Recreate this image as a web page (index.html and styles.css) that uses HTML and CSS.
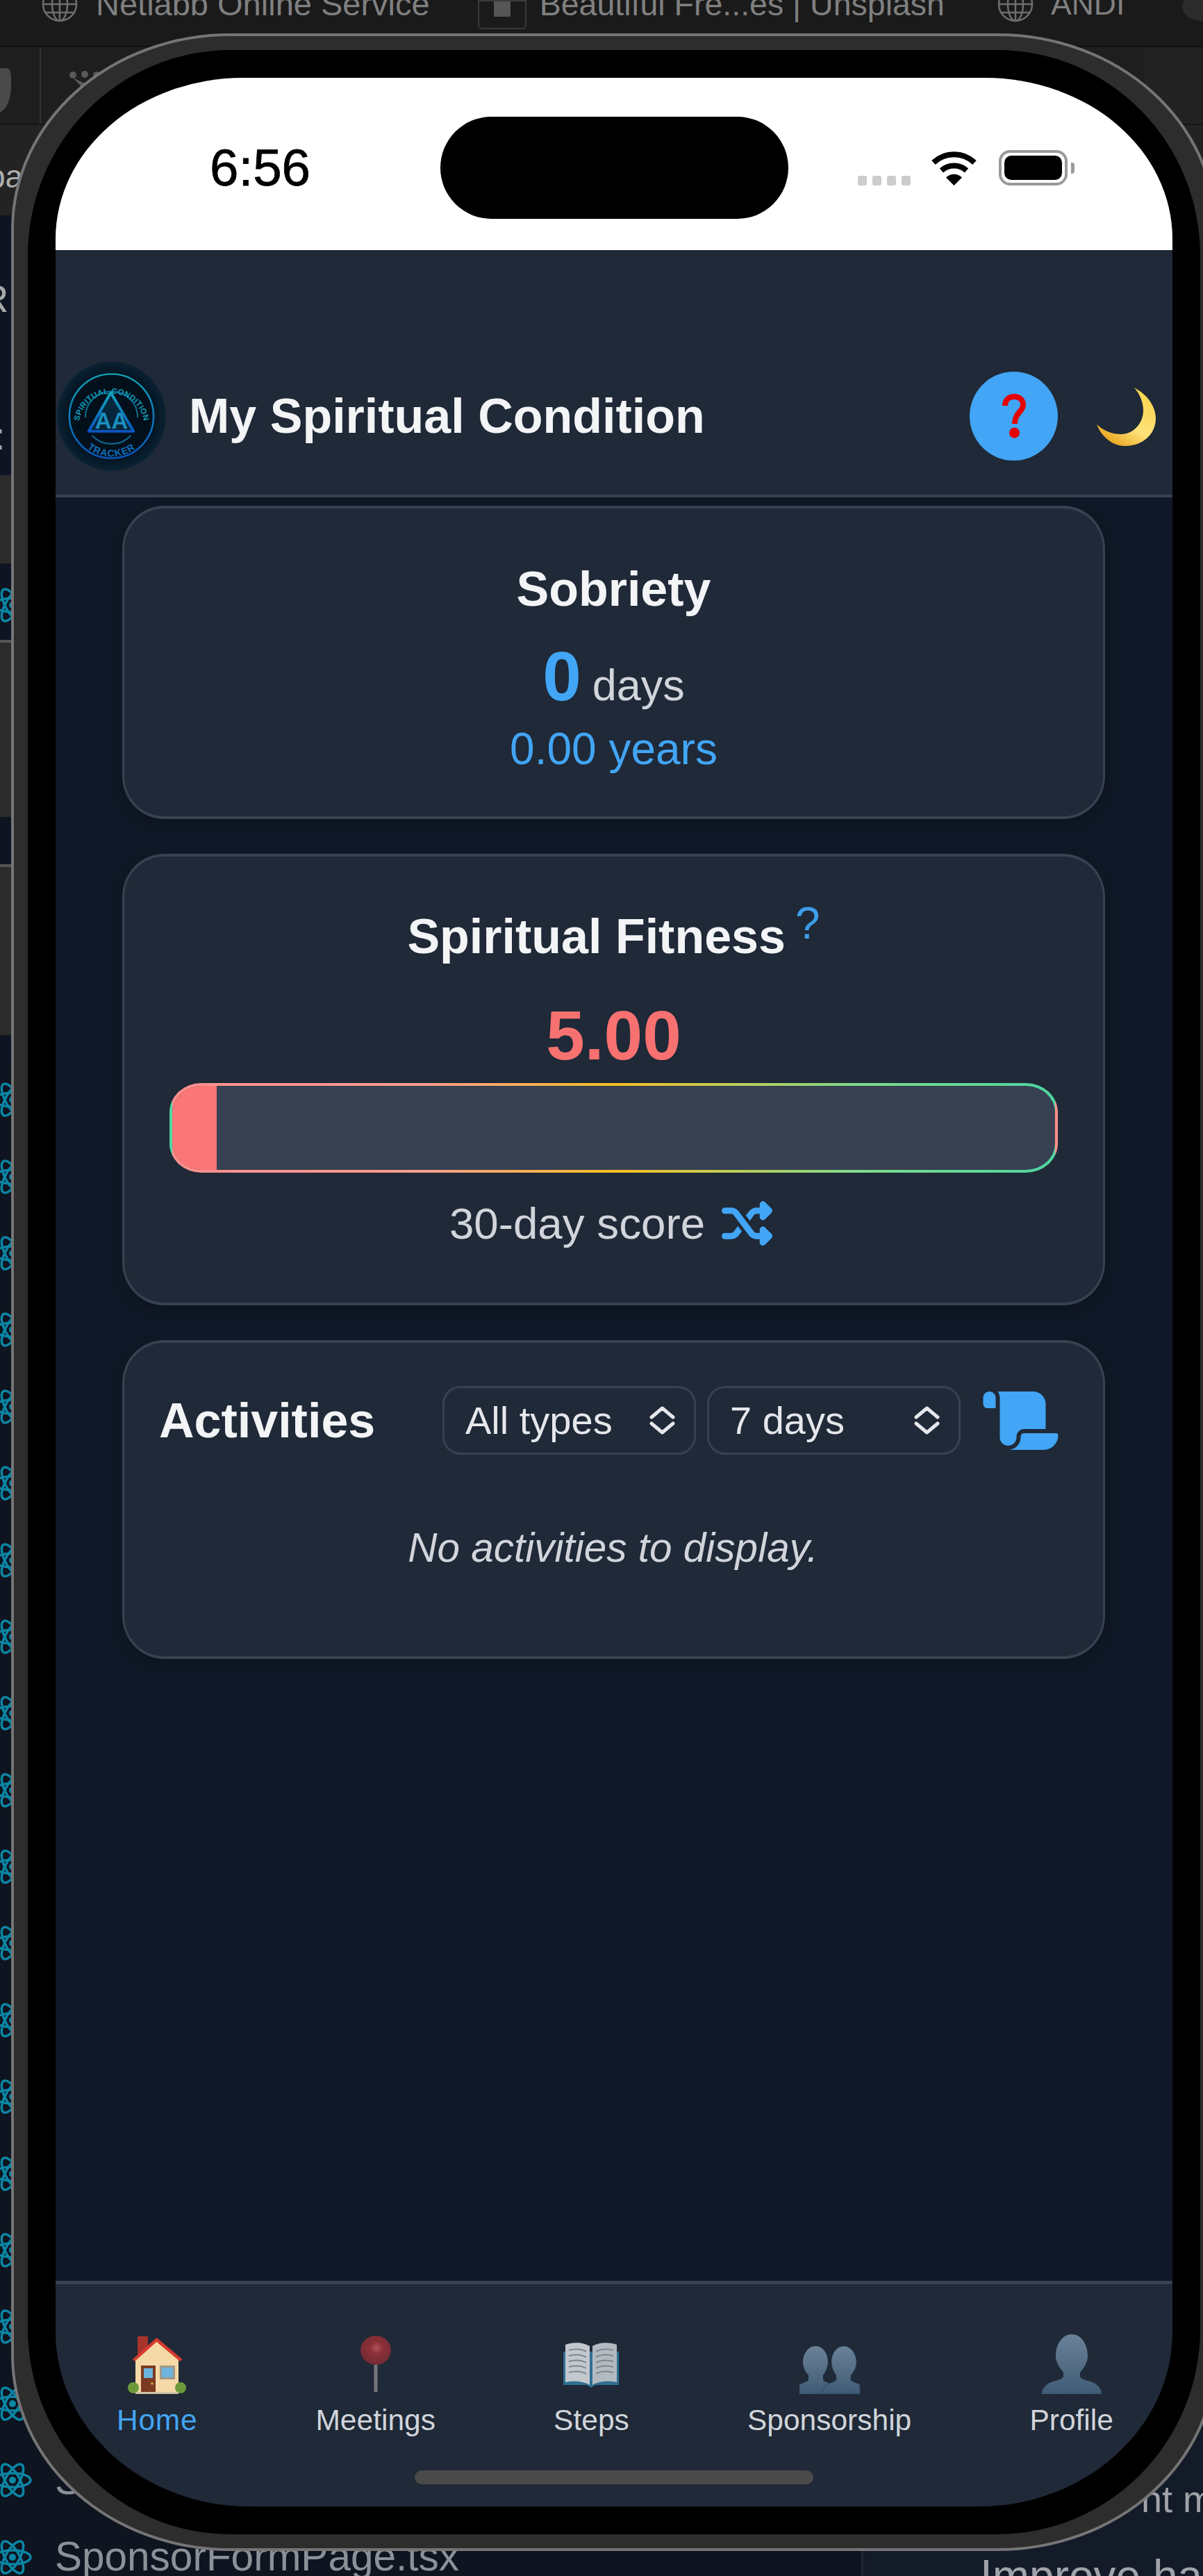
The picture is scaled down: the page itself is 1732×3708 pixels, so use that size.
FILE: index.html
```html
<!DOCTYPE html>
<html lang="en">
<head>
<meta charset="utf-8">
<title>My Spiritual Condition</title>
<link rel="stylesheet" href="styles.css">
</head>
<body>
<svg class="defs" width="0" height="0" aria-hidden="true">
  <symbol id="react" viewBox="0 0 60 60">
    <g fill="none" stroke="#0b86a4" stroke-width="3.5">
      <ellipse cx="30" cy="30" rx="26" ry="10"/>
      <ellipse cx="30" cy="30" rx="26" ry="10" transform="rotate(60 30 30)"/>
      <ellipse cx="30" cy="30" rx="26" ry="10" transform="rotate(120 30 30)"/>
    </g>
    <circle cx="30" cy="30" r="5" fill="#0b86a4"/>
  </symbol>
  <symbol id="globe" viewBox="0 0 52 52">
    <g fill="none" stroke="#6e6e6e" stroke-width="2.5">
      <circle cx="26" cy="26" r="24"/>
      <ellipse cx="26" cy="26" rx="11" ry="24"/>
      <path d="M26 2v48M2 26h48M6 14h40M6 38h40"/>
    </g>
  </symbol>
  <symbol id="chev" viewBox="0 0 37 41">
    <path d="M3 16 18.500 3 34 16M3 25l15.500 13L34 25" fill="none" stroke="#e5e7eb" stroke-width="5" stroke-linecap="round" stroke-linejoin="round"/>
  </symbol>
</svg>

<div class="desktop">
  <div class="tabs">
    <svg class="tab-globe first"><use href="#globe"/></svg>
    <span class="tab-text tab-netlabb">Netlabb Online Service</span>
    <span class="tab-square"><span class="tab-square-in"></span></span>
    <span class="tab-text tab-unsplash">Beautiful Fre...es | Unsplash</span>
    <svg class="tab-globe second"><use href="#globe"/></svg>
    <span class="tab-text tab-andi">ANDI</span>
    <span class="tab-round"></span>
  </div>
  <div class="toolbar">
    <div class="tool-cell tool-leaf"><span class="leaf"></span></div>
    <div class="tool-cell tool-rest">
      <svg class="people" viewBox="0 0 46 30"><g fill="#5a5a5a"><circle cx="6" cy="6" r="5"/><circle cx="23" cy="5" r="5"/><circle cx="40" cy="6" r="5"/><path d="M6 10 23 28 40 10 23 18Z"/></g></svg>
    </div>
    <div class="tool-end"></div>
  </div>
  <div class="pathbar"><span class="path-text">ba</span></div>
  <div class="workspace">
    <aside class="files">
      <div class="f-block f-a"><span class="f-r">R</span><span class="f-colon">:</span></div>
      <div class="f-gray f-b"></div>
      <div class="f-block f-c f-line"><svg class="file-icon"><use href="#react"/></svg></div>
      <div class="f-gray f-d"></div>
      <div class="f-block f-e f-line"></div>
      <div class="f-gray f-f"></div>
      <div class="f-block f-g"></div>
      <div class="file"><svg class="file-icon"><use href="#react"/></svg></div>
      <div class="file"><svg class="file-icon"><use href="#react"/></svg></div>
      <div class="file"><svg class="file-icon"><use href="#react"/></svg></div>
      <div class="file"><svg class="file-icon"><use href="#react"/></svg></div>
      <div class="file"><svg class="file-icon"><use href="#react"/></svg></div>
      <div class="file"><svg class="file-icon"><use href="#react"/></svg></div>
      <div class="file"><svg class="file-icon"><use href="#react"/></svg></div>
      <div class="file"><svg class="file-icon"><use href="#react"/></svg></div>
      <div class="file"><svg class="file-icon"><use href="#react"/></svg></div>
      <div class="file"><svg class="file-icon"><use href="#react"/></svg></div>
      <div class="file"><svg class="file-icon"><use href="#react"/></svg></div>
      <div class="file"><svg class="file-icon"><use href="#react"/></svg></div>
      <div class="file"><svg class="file-icon"><use href="#react"/></svg></div>
      <div class="file"><svg class="file-icon"><use href="#react"/></svg></div>
      <div class="file"><svg class="file-icon"><use href="#react"/></svg></div>
      <div class="file"><svg class="file-icon"><use href="#react"/></svg></div>
      <div class="file"><svg class="file-icon"><use href="#react"/></svg></div>
      <div class="file"><svg class="file-icon"><use href="#react"/></svg></div>
      <div class="file"><svg class="file-icon"><use href="#react"/></svg><span class="file-name">Sp</span></div>
      <div class="file"><svg class="file-icon"><use href="#react"/></svg><span class="file-name">SponsorFormPage.tsx</span></div>
    </aside>
    <section class="chat">
      <p class="chat-line chat-a">nt m</p>
      <p class="chat-line chat-b">Improve ha</p>
    </section>
  </div>
</div>

<div class="phone">
  <div class="bezel">
    <div class="screen">
      <div class="status">
        <span class="time">6:56</span>
        <div class="status-right">
          <div class="dots"><i></i><i></i><i></i><i></i></div>
          <svg class="wifi" viewBox="0 0 67 50">
            <path d="M4 17A43 43 0 0 1 63 17M15.500 28.500A27 27 0 0 1 51.500 28.500" fill="none" stroke="#000" stroke-width="8"/>
            <path d="M33.500 50 22 38.500A16.500 16.500 0 0 1 45 38.500Z"/>
          </svg>
          <div class="battery"><span class="battery-fill"></span></div>
          <span class="battery-cap"></span>
        </div>
      </div>
      <div class="island"></div>

      <header class="app-header">
        <svg class="logo" viewBox="0 0 160 160" role="img" aria-label="Spiritual Condition Tracker logo">
          <defs>
            <radialGradient id="lg-bg"><stop offset="0.7" stop-color="#03101c"/><stop offset="1" stop-color="#0a2233"/></radialGradient>
            <linearGradient id="lg-st" x1="0" y1="0" x2="0" y2="1"><stop offset="0" stop-color="#12a5b8"/><stop offset="1" stop-color="#0a55c0"/></linearGradient>
            <path id="lg-top" d="M33 88A47.500 47.500 0 0 1 127 88"/>
            <path id="lg-bot" d="M30 110A58 58 0 0 0 130 110"/>
          </defs>
          <circle cx="80" cy="80" r="79" fill="url(#lg-bg)"/>
          <circle cx="80" cy="80" r="61" fill="none" stroke="url(#lg-st)" stroke-width="2.500"/>
          <path d="M42 82A38 38 0 0 1 118 82M52 108A38 38 0 0 0 108 108" fill="none" stroke="#0d6f96" stroke-width="2"/>
          <text class="logo-ring"><textPath href="#lg-top" startOffset="50%" text-anchor="middle">SPIRITUAL CONDITION</textPath></text>
          <text class="logo-tracker"><textPath href="#lg-bot" startOffset="50%" text-anchor="middle">TRACKER</textPath></text>
          <path d="M79 46 47 102H112Z" fill="#06263c" stroke="url(#lg-st)" stroke-width="4" stroke-linejoin="round"/>
          <text class="logo-aa" x="80" y="98" text-anchor="middle">AA</text>
        </svg>
        <h1 class="app-title">My Spiritual Condition</h1>
        <button class="help" aria-label="Help">
          <svg class="help-mark" viewBox="0 0 34 64"><path d="M4 17C4 8 10 4 17 4 25 4 30 9 30 16 30 25 18 27 18 43" fill="none" stroke="#e60000" stroke-width="8"/><circle cx="17.500" cy="56" r="7.500" fill="#e60000"/></svg>
        </button>
        <svg class="moon" viewBox="0 0 86 85">
          <defs><linearGradient id="moon-g" x1="0.900" y1="0.100" x2="0.300" y2="1"><stop offset="0" stop-color="#f7d44c"/><stop offset="0.600" stop-color="#ffe27a"/><stop offset="1" stop-color="#e8a51e"/></linearGradient></defs>
          <path d="M55 1C76 12 86 30 86 45 86 69 66 85 42 85 24 85 8 72 1 54 12 64 24 68 36 68 54 68 68 52 68 34 68 22 63 10 55 1Z" fill="url(#moon-g)"/>
        </svg>
      </header>

      <main class="content">
        <section class="card card-sobriety">
          <h2 class="card-title">Sobriety</h2>
          <div class="sob-count"><span class="sob-num">0</span><span class="sob-unit">days</span></div>
          <div class="sob-years">0.00 years</div>
        </section>

        <section class="card card-fitness">
          <h2 class="card-title">Spiritual Fitness<span class="tip">?</span></h2>
          <div class="score">5.00</div>
          <div class="bar"><div class="bar-fill" style="width:5%"></div></div>
          <div class="score-note">
            <span>30-day score</span>
            <svg class="shuffle" viewBox="0 32 512 448"><path fill="#42a5f5" d="M403.800 34.400c12-5 25.700-2.200 34.900 6.900l64 64c6 6 9.400 14.100 9.400 22.600s-3.400 16.600-9.400 22.600l-64 64c-9.200 9.200-22.900 11.900-34.900 6.900s-19.800-16.600-19.800-29.600V160H352c-10.100 0-19.600 4.700-25.600 12.800L284 229.300 244 176l31.200-41.600C293.300 110.200 321.800 96 352 96h32V64c0-12.900 7.800-24.600 19.800-29.600zM164 282.700L204 336l-31.200 41.600C154.700 401.800 126.200 416 96 416H32c-17.700 0-32-14.300-32-32s14.300-32 32-32H96c10.100 0 19.600-4.700 25.600-12.800L164 282.700zm274.600 188c-9.200 9.200-22.900 11.900-34.900 6.900s-19.800-16.600-19.800-29.600V416H352c-30.200 0-58.700-14.200-76.800-38.400L121.600 172.800c-6-8.100-15.500-12.800-25.600-12.800H32c-17.700 0-32-14.300-32-32s14.300-32 32-32H96c30.200 0 58.700 14.200 76.800 38.400L326.400 339.200c6 8.100 15.500 12.800 25.600 12.800h32V320c0-12.900 7.800-24.600 19.800-29.600s25.700-2.200 34.900 6.900l64 64c6 6 9.400 14.100 9.400 22.600s-3.400 16.600-9.400 22.600l-64 64z"/></svg>
          </div>
        </section>

        <section class="card card-activities">
          <div class="act-head">
            <h2 class="act-title">Activities</h2>
            <div class="act-controls">
              <div class="select"><span>All types</span><svg class="chev"><use href="#chev"/></svg></div>
              <div class="select"><span>7 days</span><svg class="chev"><use href="#chev"/></svg></div>
              <svg class="scroll" viewBox="0 32 576 448"><path fill="#42a5f5" d="M0 80v48c0 17.700 14.300 32 32 32H48 96V80c0-26.500-21.500-48-48-48S0 53.500 0 80zM112 32c10 13.400 16 30 16 48V384c0 35.300 28.700 64 64 64s64-28.700 64-64v-5.300c0-32.400 26.300-58.700 58.700-58.700H480V128c0-53-43-96-96-96H112zM464 480c61.900 0 112-50.100 112-112c0-8.800-7.200-16-16-16H314.700c-14.700 0-26.700 11.900-26.700 26.700V384c0 53-43 96-96 96H368h96z"/></svg>
            </div>
          </div>
          <p class="empty">No activities to display.</p>
        </section>
      </main>

      <nav class="tabbar">
        <a class="tab active">
          <svg class="tab-icon" viewBox="0 0 96 96">
            <rect x="20" y="8" width="15" height="26" fill="#a8332a"/>
            <path d="M17 38 47.500 14 79 38V90H17Z" fill="#f5d9a6"/>
            <path d="M13 41 47.500 10 84.500 41 81 44 47.500 16 16 44Z" fill="#d63a2f"/>
            <rect x="25" y="50" width="21" height="38" fill="#7a3a22"/>
            <rect x="29" y="54" width="13" height="14" fill="#6db4de"/>
            <circle cx="41" cy="76" r="1.800" fill="#e5a93a"/>
            <rect x="52" y="50" width="22" height="20" fill="#a39a86"/>
            <rect x="55" y="53" width="16" height="14" fill="#6db4de"/>
            <circle cx="14" cy="82" r="8" fill="#6c9a3a"/><circle cx="82" cy="82" r="8" fill="#6c9a3a"/>
            <rect x="17" y="88" width="62" height="3" fill="#cfc3a8"/>
          </svg>
          <span>Home</span>
        </a>
        <a class="tab">
          <svg class="tab-icon" viewBox="0 0 96 96">
            <defs><radialGradient id="pin-g" cx="0.520" cy="0.420" r="0.600"><stop offset="0" stop-color="#b0525a"/><stop offset="0.350" stop-color="#8e3038"/><stop offset="1" stop-color="#702a33"/></radialGradient></defs>
            <rect x="45.500" y="44" width="5" height="44" fill="#75777a"/>
            <ellipse cx="48" cy="28" rx="22" ry="21" fill="url(#pin-g)"/>
          </svg>
          <span>Meetings</span>
        </a>
        <a class="tab">
          <svg class="tab-icon" viewBox="0 0 96 96">
            <path d="M8 30H88V78H54L48 82 42 78H8Z" fill="#2f6f92"/>
            <path d="M11 20C22 16 36 16 46 22V78C36 72 22 72 11 74Z" fill="#c3c8ce"/>
            <path d="M85 20C74 16 60 16 50 22V78C60 72 74 72 85 74Z" fill="#b4bac1"/>
            <path d="M16 28C24 26 34 26 41 30M16 36C24 34 34 34 41 38M16 44C24 42 34 42 41 46M16 52C24 50 34 50 41 54M16 60C24 58 34 58 41 62M55 30C62 26 72 26 80 28M55 38C62 34 72 34 80 36M55 46C62 42 72 42 80 44M55 54C62 50 72 50 80 52M55 62C62 58 72 58 80 60" fill="none" stroke="#7e858d" stroke-width="2"/>
          </svg>
          <span>Steps</span>
        </a>
        <a class="tab">
          <svg class="tab-icon" viewBox="0 0 96 96">
            <defs><linearGradient id="bust-a" x1="0" y1="0" x2="0" y2="1"><stop offset="0" stop-color="#6b8298"/><stop offset="1" stop-color="#3f5b75"/></linearGradient></defs>
            <path id="bust-l" fill="url(#bust-a)" d="M28 22C39 22 46 33 46 45 46 53 42 60 39 64V71C41 74 50 75 54 79L62 91H5V78C8 75 16 74 18 71V64C14 60 10 53 10 45 10 33 18 22 28 22Z"/>
            <path class="bust-r" fill="url(#bust-a)" stroke="#2c4258" stroke-width="1" d="M69 22C58 22 51 33 51 45 51 53 55 60 58 64V71C56 74 47 75 43 79L35 91H92V78C89 75 81 74 79 71V64C83 60 87 53 87 45 87 33 79 22 69 22Z"/>
          </svg>
          <span>Sponsorship</span>
        </a>
        <a class="tab">
          <svg class="tab-icon" viewBox="0 0 96 96">
            <path fill="url(#bust-a)" d="M48 5C62 5 71 20 71 36 71 46 65 54 60 60V66C62 71 72 71 80 75 87 79 91 85 91 91H5C5 85 9 79 16 75 24 71 34 71 36 66V60C31 54 25 46 25 36 25 20 34 5 48 5Z"/>
          </svg>
          <span>Profile</span>
        </a>
      </nav>
      <div class="home-indicator"></div>
    </div>
  </div>
</div>
</body>
</html>
```

FILE: styles.css
```css
* { box-sizing: border-box; }

html, body {
  margin: 0;
  padding: 0;
}

body {
  position: relative;
  width: 1732px;
  height: 3708px;
  overflow: hidden;
  background: #0e1420;
  font-family: "Liberation Sans", Arial, sans-serif;
}

.defs { position: absolute; }

/* ---------- desktop behind the phone ---------- */
.desktop {
  display: flex;
  flex-direction: column;
  height: 3708px;
}

.tabs {
  display: flex;
  align-items: flex-start;
  height: 68px;
  background: #1a1a1a;
  border-bottom: 2px solid #101010;
  overflow: hidden;
}

.tab-globe {
  width: 52px;
  height: 52px;
  margin-top: -20px;
  flex: none;
}
.tab-globe.first { margin-left: 60px; }
.tab-globe.second { margin-left: 76px; }

.tab-text {
  font-size: 47px;
  line-height: 54px;
  margin-top: -21px;
  color: #808080;
  white-space: nowrap;
}
.tab-netlabb { margin-left: 26px; }
.tab-unsplash { margin-left: 19px; font-size: 46.500px; }
.tab-andi { margin-left: 25px; font-size: 44.500px; }

.tab-square {
  width: 70px;
  height: 42px;
  margin-left: 69px;
  border: 2px solid #3a3a3a;
  border-radius: 0 0 6px 6px;
  display: flex;
  justify-content: center;
  flex: none;
}
.tab-square-in {
  width: 24px;
  height: 22px;
  background: #555;
}

.tab-round {
  width: 60px;
  height: 40px;
  margin-left: 83px;
  margin-top: -10px;
  border-radius: 50%;
  background: #2c2c2c;
  flex: none;
}

.toolbar {
  display: flex;
  height: 112px;
  background: #1e1e1e;
  border-bottom: 2px solid #141414;
}
.tool-cell { height: 100%; }
.tool-leaf {
  width: 59px;
  border-right: 2px solid #333;
  overflow: hidden;
}
.leaf {
  display: block;
  width: 32px;
  height: 64px;
  margin: 30px 0 0 -16px;
  background: #4a4a4a;
  border-radius: 60% 20%;
}
.tool-rest {
  width: 1589px;
  padding: 34px 0 0 40px;
}
.people { width: 46px; height: 30px; display: block; }
.tool-end {
  flex: 1;
  background: #222;
}

.pathbar {
  height: 130px;
  background: #232323;
  padding-top: 47px;
  overflow: hidden;
}
.path-text {
  display: block;
  margin-left: -18px;
  font-size: 46px;
  line-height: 54px;
  color: #b0b0b0;
}

.workspace {
  display: flex;
  flex: 1;
  min-height: 0;
  overflow: hidden;
}

.files {
  width: 1240px;
  flex: none;
  background: #0e1420;
  display: flex;
  flex-direction: column;
}
.f-block { background: #0e1421; flex: none; overflow: hidden; }
.f-gray { background: #2b2b2b; flex: none; }
.f-line { border-bottom: 4px solid #555; }
.f-a { height: 374px; }
.f-b { height: 127px; }
.f-c { height: 114px; padding-top: 30px; }
.f-d { height: 251px; }
.f-e { height: 72px; }
.f-f { height: 242px; }
.f-g { height: 38px; }

.f-r, .f-colon {
  display: block;
  margin-left: -28px;
  font-size: 56px;
  line-height: 60px;
  color: #a8a8a8;
}
.f-r { margin-top: 90px; }
.f-colon { margin-top: 138px; margin-left: -8px; }

.file {
  display: flex;
  align-items: center;
  height: 110.400px;
  flex: none;
}
.file-icon {
  width: 60px;
  height: 60px;
  margin-left: -12px;
  flex: none;
}
.file-name {
  margin-left: 31px;
  padding-bottom: 2px;
  font-size: 58.500px;
  color: #8c9198;
}

.chat {
  flex: 1;
  background: #131a28;
  border-left: 3px solid #1e2836;
  display: flex;
  flex-direction: column;
  justify-content: flex-end;
}
.chat-line {
  margin: 0;
  white-space: nowrap;
  color: #a0a4aa;
}
.chat-a {
  margin: 0 0 41px 400px;
  font-size: 54px;
  line-height: 64px;
}
.chat-b {
  margin: 0 0 -38px 168px;
  font-size: 64px;
  line-height: 76px;
}

/* ---------- phone ---------- */
.phone {
  position: absolute;
  left: 16px;
  top: 48px;
  width: 1736px;
  height: 3624px;
  padding: 20px;
  background: #2d2d2d;
  border: 4px solid #757575;
  border-radius: 315px / 282px;
}
.bezel {
  height: 100%;
  padding: 40px;
  background: #000;
  border-radius: 292px / 296px;
}
.screen {
  position: relative;
  display: flex;
  flex-direction: column;
  height: 100%;
  overflow: hidden;
  background: #101827;
  border-radius: 270px 270px 280px 280px / 232px 232px 252px 252px;
}

.status {
  display: flex;
  align-items: center;
  justify-content: space-between;
  height: 248px;
  flex: none;
  padding: 11px 141px 0 222px;
  background: #fff;
}
.time {
  font-size: 74.500px;
  line-height: 84px;
  color: #000;
  -webkit-text-stroke: 0.8px #000;
}
.status-right {
  display: flex;
  align-items: flex-end;
}
.dots {
  display: flex;
  gap: 8px;
  margin-right: 29px;
}
.dots i {
  display: block;
  width: 13px;
  height: 14px;
  border-radius: 3px;
  background: #ccc;
}
.wifi {
  width: 67px;
  height: 50px;
  margin-right: 31px;
}
.battery {
  width: 99px;
  height: 51px;
  padding: 4px;
  border: 4px solid #999;
  border-radius: 16px;
}
.battery-fill {
  display: block;
  height: 100%;
  border-radius: 10px;
  background: #000;
}
.battery-cap {
  width: 5px;
  height: 16px;
  margin: 0 0 17px 5px;
  border-radius: 0 4px 4px 0;
  background: #999;
}

.island {
  position: absolute;
  left: 554px;
  top: 56px;
  width: 501px;
  height: 147px;
  border-radius: 74px;
  background: #000;
}

.app-header {
  display: flex;
  align-items: center;
  flex: none;
  padding: 159px 24px 33px 1px;
  background: #1f2937;
  border-bottom: 4px solid #374151;
}
.logo {
  width: 159px;
  height: 160px;
  flex: none;
}
.logo-ring {
  font-size: 11.500px;
  font-weight: 700;
  fill: #109cb8;
  letter-spacing: 0.300px;
}
.logo-tracker {
  font-size: 14px;
  font-weight: 700;
  fill: #0d6fb8;
  letter-spacing: 1px;
}
.logo-aa {
  font-size: 33px;
  font-weight: 700;
  fill: #1a8fc0;
}
.app-title {
  margin: 0 0 0 32px;
  font-size: 70px;
  line-height: 84px;
  font-weight: 700;
  color: #f3f4f6;
  white-space: nowrap;
}
.help {
  display: flex;
  align-items: center;
  justify-content: center;
  width: 127px;
  height: 128px;
  margin-left: auto;
  padding: 0;
  border: 0;
  border-radius: 50%;
  background: #42a5f5;
  flex: none;
}
.help-mark { width: 34px; height: 64px; }
.moon {
  width: 86px;
  height: 85px;
  margin-left: 55px;
  flex: none;
}

.content {
  flex: 1;
  min-height: 0;
  display: flex;
  flex-direction: column;
  gap: 50px;
  padding: 12px 97px 0 96px;
}
.card {
  flex: none;
  background: #1f2937;
  border-style: solid;
  border-color: #374151;
  border-width: 4px 3px;
  border-radius: 60px / 62px;
  box-shadow: 0 6px 20px rgba(0, 0, 0, 0.22);
  text-align: center;
}
.card-sobriety { padding: 74px 0 59px; }
.card-fitness { padding: 73px 65px 76px; }
.card-activities { padding: 62px 64px 121px 50px; }

.card-title {
  margin: 0;
  font-size: 70px;
  line-height: 84px;
  font-weight: 700;
  color: #f3f4f6;
}
.tip {
  margin-left: 14px;
  font-size: 64px;
  font-weight: 400;
  line-height: 0;
  vertical-align: 21px;
  color: #3d9eea;
}

.sob-count {
  display: flex;
  align-items: baseline;
  justify-content: center;
  height: 120px;
  margin-top: 23px;
}
.sob-num {
  font-size: 100px;
  line-height: 120px;
  font-weight: 700;
  color: #42a5f5;
}
.sob-unit {
  margin-left: 16px;
  font-size: 63px;
  line-height: 76px;
  color: #d1d5db;
}
.sob-years {
  margin-top: 7px;
  font-size: 64px;
  line-height: 76px;
  color: #42a5f5;
}

.score {
  margin-top: 40px;
  font-size: 100px;
  line-height: 120px;
  font-weight: 700;
  color: #f87171;
}
.bar {
  height: 129px;
  margin-top: 9px;
  overflow: hidden;
  border: 4px solid transparent;
  border-radius: 46px / 42px;
  background:
    linear-gradient(#374151, #374151) padding-box,
    linear-gradient(90deg, #ff8f8f 0%, #ff9c92 28%, #fbbf24 50%, #7edc8e 78%, #4ed6a0 100%) border-box;
  background-origin: padding-box, padding-box;
}
.bar-fill {
  height: 100%;
  background: #fb7777;
}
.score-note {
  display: flex;
  align-items: center;
  justify-content: center;
  gap: 24px;
  margin-top: 35px;
  padding-right: 8px;
  font-size: 63.700px;
  line-height: 76px;
  color: #d1d5db;
}
.shuffle { width: 73px; height: 64px; flex: none; }

.act-head {
  display: flex;
  align-items: center;
  justify-content: space-between;
}
.act-title {
  margin: 0;
  font-size: 70px;
  line-height: 84px;
  font-weight: 700;
  color: #f3f4f6;
}
.act-controls {
  display: flex;
  align-items: center;
  gap: 16px;
}
.select {
  display: flex;
  align-items: center;
  justify-content: space-between;
  width: 365px;
  height: 99px;
  padding: 0 27px 0 30px;
  border: 3px solid #374151;
  border-radius: 26px;
  font-size: 56px;
  color: #e5e7eb;
}
.chev { width: 37px; height: 41px; flex: none; }
.scroll {
  width: 109px;
  height: 84px;
  margin-left: 16px;
  flex: none;
}
.empty {
  margin: 99px 0 0 12px;
  font-size: 58.500px;
  font-style: italic;
  line-height: 70px;
  color: #d1d5db;
}

.tabbar {
  display: flex;
  justify-content: space-around;
  align-items: flex-start;
  height: 325px;
  flex: none;
  padding: 67px 0 0 3px;
  background: #1f2937;
  border-top: 5px solid #374151;
}
.tab {
  display: flex;
  flex-direction: column;
  align-items: center;
  gap: 8px;
  font-size: 42.500px;
  line-height: 50px;
  color: #d1d5db;
}
.tab.active {
  color: #42a5f5;
  letter-spacing: 0.700px;
}
.tab-icon { width: 96px; height: 96px; flex: none; }

.home-indicator {
  position: absolute;
  left: 517px;
  bottom: 32px;
  width: 574px;
  height: 20px;
  border-radius: 10px;
  background: #4a4a4a;
}
```
